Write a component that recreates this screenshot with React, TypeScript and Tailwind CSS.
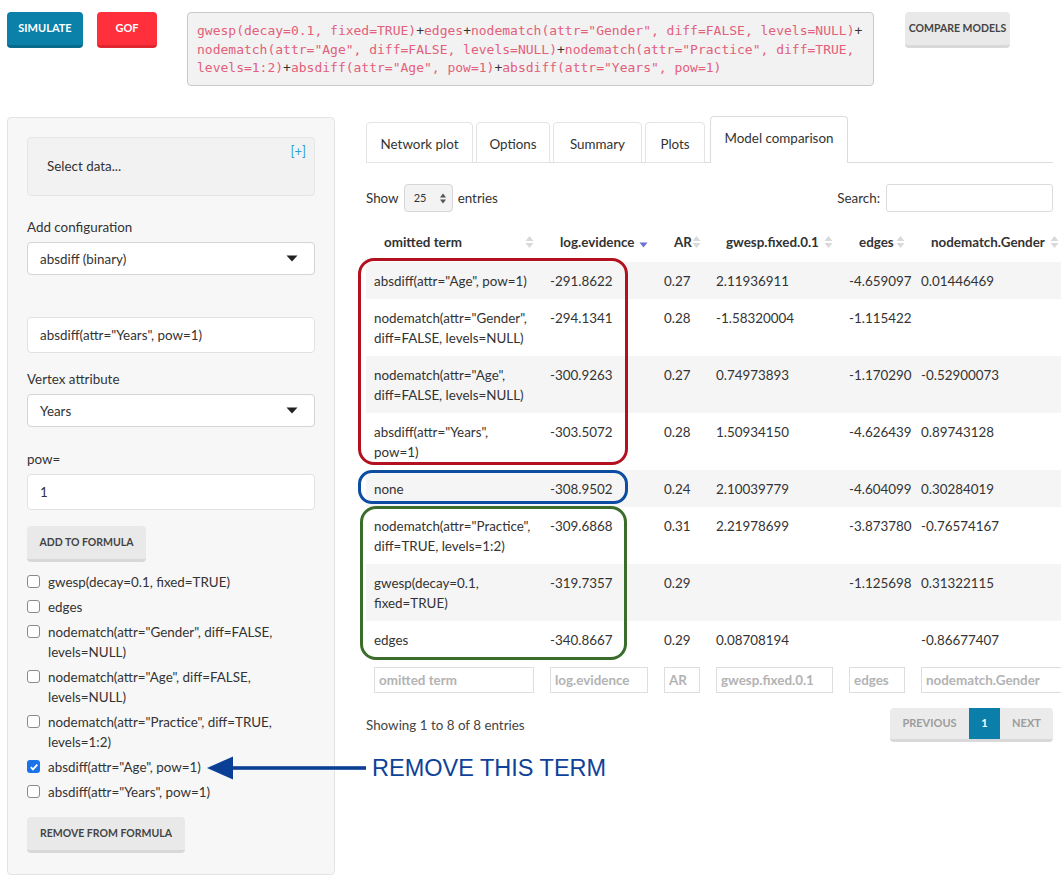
import type { ReactNode } from "react";

const rows: {
  term: string[];
  logev: string;
  ar: string;
  gwesp: string;
  edges: string;
  gender: string;
}[] = [
  { term: ['absdiff(attr="Age", pow=1)'], logev: "-291.8622", ar: "0.27", gwesp: "2.11936911", edges: "-4.659097", gender: "0.01446469" },
  { term: ['nodematch(attr="Gender",', "diff=FALSE, levels=NULL)"], logev: "-294.1341", ar: "0.28", gwesp: "-1.58320004", edges: "-1.115422", gender: "" },
  { term: ['nodematch(attr="Age",', "diff=FALSE, levels=NULL)"], logev: "-300.9263", ar: "0.27", gwesp: "0.74973893", edges: "-1.170290", gender: "-0.52900073" },
  { term: ['absdiff(attr="Years",', "pow=1)"], logev: "-303.5072", ar: "0.28", gwesp: "1.50934150", edges: "-4.626439", gender: "0.89743128" },
  { term: ["none"], logev: "-308.9502", ar: "0.24", gwesp: "2.10039779", edges: "-4.604099", gender: "0.30284019" },
  { term: ['nodematch(attr="Practice",', "diff=TRUE, levels=1:2)"], logev: "-309.6868", ar: "0.31", gwesp: "2.21978699", edges: "-3.873780", gender: "-0.76574167" },
  { term: ["gwesp(decay=0.1,", "fixed=TRUE)"], logev: "-319.7357", ar: "0.29", gwesp: "", edges: "-1.125698", gender: "0.31322115" },
  { term: ["edges"], logev: "-340.8667", ar: "0.29", gwesp: "0.08708194", edges: "", gender: "-0.86677407" },
];

const columns = [
  { label: "omitted term", width: "w-[176px]", tight: false, active: false },
  { label: "log.evidence", width: "w-[114px]", tight: false, active: true },
  { label: "AR", width: "w-[52px]", tight: false, active: false },
  { label: "gwesp.fixed.0.1", width: "w-[133px]", tight: true, active: false },
  { label: "edges", width: "w-[72px]", tight: false, active: false },
  { label: "nodematch.Gender", width: "w-[170px]", tight: true, active: false },
];

function SortIcon({ active }: { active: boolean }) {
  if (active) {
    return (
      <svg width="9" height="14" viewBox="0 0 9 14" className="shrink-0">
        <path d="M0.5 7.5 L8.5 7.5 L4.5 12.5 Z" fill="#6a72d4" />
      </svg>
    );
  }
  return (
    <svg width="9" height="14" viewBox="0 0 9 14" className="shrink-0">
      <path d="M0.5 6 L8.5 6 L4.5 1 Z" fill="#d9d9d9" />
      <path d="M0.5 8 L8.5 8 L4.5 13 Z" fill="#d9d9d9" />
    </svg>
  );
}

function Caret() {
  return (
    <svg width="12" height="7" viewBox="0 0 12 7">
      <path d="M0.5 0.5 L11.5 0.5 L6 6.5 Z" fill="#222" />
    </svg>
  );
}

function GrayButton({ children, className = "" }: { children: ReactNode; className?: string }) {
  return (
    <button
      type="button"
      className={`h-9 whitespace-nowrap rounded-[4px] border-b-[3px] border-[#d8d8d8] bg-[#e9e9e9] text-center text-[10.5px] font-bold uppercase text-[#444] ${className}`}
    >
      {children}
    </button>
  );
}

function Checkbox({ checked }: { checked?: boolean }) {
  if (checked) {
    return (
      <span className="mt-[3px] flex h-[13px] w-[13px] shrink-0 items-center justify-center rounded-[3px] bg-[#1a73e8]">
        <svg width="10" height="10" viewBox="0 0 10 10">
          <path d="M1.8 5.2 L4 7.4 L8.3 2.6" stroke="#fff" strokeWidth="1.8" fill="none" />
        </svg>
      </span>
    );
  }
  return <span className="mt-[3px] h-[13px] w-[13px] shrink-0 rounded-[3px] border border-[#8a8a8a] bg-white" />;
}

function TermCheck({ lines, checked }: { lines: string[]; checked?: boolean }) {
  return (
    <label className="flex gap-[8px] leading-[20px]">
      <Checkbox checked={checked} />
      <span>
        {lines.map((l) => (
          <span key={l} className="block">
            {l}
          </span>
        ))}
      </span>
    </label>
  );
}

function Sidebar() {
  return (
    <aside className="ml-[7px] w-[328px] shrink-0 rounded-[4px] border border-[#e3e3e3] bg-[#f7f7f7] px-[19px] pt-[19px] pb-[21px]">
      <div className="relative h-[59px] rounded-[4px] border border-[#e6e6e6] bg-[#f2f2f2] pl-[19px] pt-[18px]">
        <span className="absolute right-[8px] top-[4px] text-[13px] text-[#2a9fd6]">[+]</span>
        <span>Select data...</span>
      </div>

      <div className="mt-[21px]">Add configuration</div>
      <div className="mt-[5px] flex h-[33px] items-center justify-between rounded-[4px] border border-[#d4d4d4] bg-white pl-[12px] pr-[16px]">
        <span>absdiff (binary)</span>
        <Caret />
      </div>

      <div className="mt-[42px] flex h-[36px] items-center rounded-[4px] border border-[#e2e2e2] bg-white pl-[12px]">
        absdiff(attr="Years", pow=1)
      </div>

      <div className="mt-[16px]">Vertex attribute</div>
      <div className="mt-[5px] flex h-[33px] items-center justify-between rounded-[4px] border border-[#d4d4d4] bg-white pl-[12px] pr-[16px]">
        <span>Years</span>
        <Caret />
      </div>

      <div className="mt-[22px]">pow=</div>
      <div className="mt-[5px] flex h-[36px] items-center rounded-[4px] border border-[#e2e2e2] bg-white pl-[12px]">
        1
      </div>

      <GrayButton className="mt-[16px] w-[119px]">Add to formula</GrayButton>

      <div className="mt-[10px] flex flex-col gap-[5px]">
        <TermCheck lines={["gwesp(decay=0.1, fixed=TRUE)"]} />
        <TermCheck lines={["edges"]} />
        <TermCheck lines={['nodematch(attr="Gender", diff=FALSE,', "levels=NULL)"]} />
        <TermCheck lines={['nodematch(attr="Age", diff=FALSE,', "levels=NULL)"]} />
        <TermCheck lines={['nodematch(attr="Practice", diff=TRUE,', "levels=1:2)"]} />
        <TermCheck lines={['absdiff(attr="Age", pow=1)']} checked />
        <TermCheck lines={['absdiff(attr="Years", pow=1)']} />
      </div>

      <GrayButton className="mt-[15px] w-[158px]">Remove from formula</GrayButton>
    </aside>
  );
}

function Tabs() {
  const tabs = [
    { label: "Network plot", w: "w-[107px]" },
    { label: "Options", w: "w-[74px]" },
    { label: "Summary", w: "w-[89px]" },
    { label: "Plots", w: "w-[60px]" },
  ];
  return (
    <div className="flex h-[46px] items-end gap-[3px] border-b border-[#dcdcdc]">
      {tabs.map((t) => (
        <div
          key={t.label}
          className={`${t.w} -mb-px flex h-[41px] items-center justify-center rounded-t-[4px] border border-[#e4e4e4] pt-[3px] text-[#333]`}
        >
          {t.label}
        </div>
      ))}
      <div className="-mb-px ml-[2px] flex h-[47px] w-[138px] items-start justify-center rounded-t-[4px] border border-b-0 border-[#dcdcdc] bg-white pt-[11px] text-[#333]">
        Model comparison
      </div>
    </div>
  );
}

function DataTable() {
  return (
    <table className="w-[717px] table-fixed border-collapse text-left">
      <colgroup>
        {columns.map((c) => (
          <col key={c.label} className={c.width} />
        ))}
      </colgroup>
      <thead>
        <tr className="h-[40px]">
          {columns.map((c) => (
            <th key={c.label} className="pl-[18px] pr-[8px] align-middle font-bold text-[#333]">
              <div className={`flex items-center ${c.tight ? "gap-[5px]" : "justify-between"}`}>
                <span className="whitespace-nowrap">{c.label}</span>
                <SortIcon active={c.active} />
              </div>
            </th>
          ))}
        </tr>
      </thead>
      <tbody>
        {rows.map((r, i) => (
          <tr key={r.logev} className={i % 2 === 0 ? "bg-[#f5f5f5]" : "bg-white"}>
            <td className="px-[8px] py-[8.5px] align-top leading-[20px]">
              {r.term.map((l) => (
                <span key={l} className="block whitespace-nowrap">
                  {l}
                </span>
              ))}
            </td>
            <td className="px-[8px] py-[8.5px] align-top leading-[20px]">{r.logev}</td>
            <td className="px-[8px] py-[8.5px] align-top leading-[20px]">{r.ar}</td>
            <td className="px-[8px] py-[8.5px] align-top leading-[20px]">{r.gwesp}</td>
            <td className="px-[8px] py-[8.5px] align-top leading-[20px]">{r.edges}</td>
            <td className="px-[8px] py-[8.5px] align-top leading-[20px]">{r.gender}</td>
          </tr>
        ))}
      </tbody>
      <tfoot>
        <tr>
          {columns.map((c) => (
            <td key={c.label} className="px-[8px] pt-[9px]">
              <div className="flex h-[26px] items-center overflow-hidden whitespace-nowrap border border-[#dedede] pl-[4px] font-bold text-[#b3b3b3]">
                {c.label}
              </div>
            </td>
          ))}
        </tr>
      </tfoot>
    </table>
  );
}

function MainPanel() {
  return (
    <main className="ml-[31px] w-[687px] shrink-0">
      <Tabs />

      <div className="mt-[21px] flex items-center justify-between">
        <div className="flex items-center">
          <span>Show</span>
          <div className="mx-[5px] flex h-[28px] w-[49px] items-center justify-between rounded-[4px] border border-[#d6d6d6] bg-[#f3f3f3] pl-[9px] pr-[6px] text-[11px]">
            <span>25</span>
            <svg width="6" height="11" viewBox="0 0 6 11">
              <path d="M0 4.5 L6 4.5 L3 0.5 Z" fill="#555" />
              <path d="M0 6.5 L6 6.5 L3 10.5 Z" fill="#555" />
            </svg>
          </div>
          <span>entries</span>
        </div>
        <div className="flex items-center gap-[6px]">
          <span>Search:</span>
          <div className="h-[28px] w-[167px] rounded-[3px] border border-[#dcdcdc] bg-white" />
        </div>
      </div>

      <div className="mt-[10px]">
        <DataTable />
      </div>

      <div className="mt-[15px] flex items-center justify-between">
        <span className="text-[#444]">Showing 1 to 8 of 8 entries</span>
        <div className="flex h-[34px] overflow-hidden rounded-[4px] border-b-[3px] border-[#d9d9d9] bg-[#ebebeb] text-[11px] font-bold">
          <span className="flex w-[79px] items-center justify-center text-[#9c9c9c]">PREVIOUS</span>
          <span className="flex w-[31px] items-center justify-center bg-[#0b7ea9] text-white">1</span>
          <span className="flex w-[53px] items-center justify-center text-[#9c9c9c]">NEXT</span>
        </div>
      </div>
    </main>
  );
}

export default function App() {
  return (
    <div className="relative h-[886px] w-[1061px] overflow-hidden bg-white font-['Lato',sans-serif] text-[13.4px] text-[#333]">
      <header className="flex items-start px-[7px] pt-[12px]">
        <button
          type="button"
          className="h-9 w-[76px] rounded-[4px] border-b-[3px] border-[#086a8d] bg-[#0b80a9] text-[11px] font-bold text-white"
        >
          SIMULATE
        </button>
        <button
          type="button"
          className="ml-[14px] h-9 w-[60px] rounded-[4px] border-b-[3px] border-[#e02631] bg-[#ff303c] text-[11px] font-bold text-white"
        >
          GOF
        </button>
        <div className="ml-[30px] h-[74px] w-[687px] whitespace-pre rounded-[4px] border border-[#c9c9c9] bg-[#f2f2f2] px-[9px] py-[9px] font-['DejaVu_Sans_Mono',monospace] text-[13px] leading-[18.5px] text-[#e2607a]">
          <div>
            gwesp(decay=0.1, fixed=TRUE)<span className="text-[#333]">+</span>edges<span className="text-[#333]">+</span>
            nodematch(attr="Gender", diff=FALSE, levels=NULL)<span className="text-[#333]">+</span>
          </div>
          <div>
            nodematch(attr="Age", diff=FALSE, levels=NULL)<span className="text-[#333]">+</span>nodematch(attr="Practice", diff=TRUE,
          </div>
          <div>
            levels=1:2)<span className="text-[#333]">+</span>absdiff(attr="Age", pow=1)<span className="text-[#333]">+</span>absdiff(attr="Years", pow=1)
          </div>
        </div>
        <GrayButton className="ml-[31px] w-[105px]">Compare models</GrayButton>
      </header>

      <div className="mt-[31px] flex items-start">
        <Sidebar />
        <MainPanel />
      </div>

      {/* annotations drawn over the table */}
      <div className="pointer-events-none absolute left-[358px] top-[258px] h-[207px] w-[270px] rounded-[16px] border-[3px] border-[#b3111f]" />
      <div className="pointer-events-none absolute left-[358px] top-[470px] h-[34px] w-[270px] rounded-[14px] border-[3px] border-[#0c4ca1]" />
      <div className="pointer-events-none absolute left-[360px] top-[506px] h-[154px] w-[267px] rounded-[16px] border-[3px] border-[#3a6d2b]" />

      <svg className="absolute left-[205px] top-[755px]" width="162" height="26" viewBox="0 0 162 26">
        <path d="M2 13 L28 1.5 L28 24.5 Z" fill="#0b3f95" />
        <rect x="26" y="11.2" width="135" height="3.6" fill="#0b3f95" />
      </svg>
      <span className="absolute left-[372px] top-[753px] font-['Liberation_Sans',Arial,sans-serif] text-[23.5px] leading-[30px] text-[#0e4298]">
        REMOVE THIS TERM
      </span>
    </div>
  );
}
